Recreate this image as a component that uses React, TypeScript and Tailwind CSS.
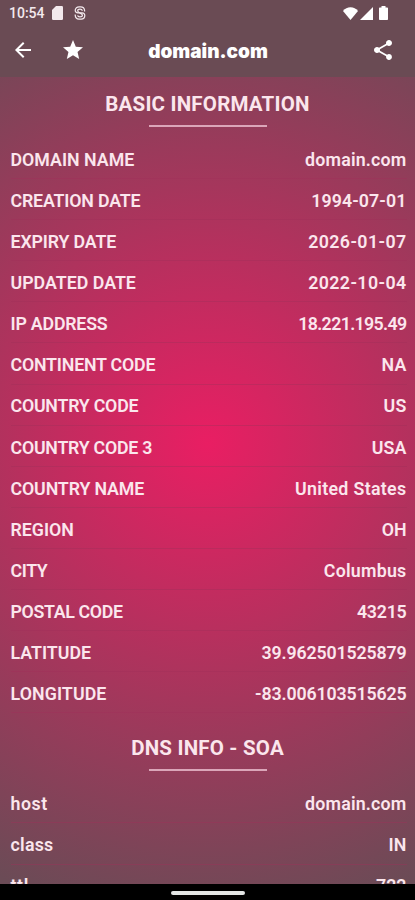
import React from 'react'

const basicInfo = [
  { label: 'DOMAIN NAME', value: 'domain.com', labelClass: 'tracking-normal', valueClass: 'tracking-[0.2px]' },
  { label: 'CREATION DATE', value: '1994-07-01', labelClass: 'tracking-[-0.18px]', valueClass: 'tracking-[0.1px]' },
  { label: 'EXPIRY DATE', value: '2026-01-07', labelClass: 'tracking-[-0.15px]', valueClass: 'tracking-[0.4px]' },
  { label: 'UPDATED DATE', value: '2022-10-04', labelClass: 'tracking-normal', valueClass: 'tracking-[0.4px]' },
  { label: 'IP ADDRESS', value: '18.221.195.49', labelClass: 'tracking-[-0.2px]', valueClass: 'tracking-[-0.65px]' },
  { label: 'CONTINENT CODE', value: 'NA', labelClass: 'tracking-[-0.2px]', valueClass: 'tracking-[0.2px]' },
  { label: 'COUNTRY CODE', value: 'US', labelClass: 'tracking-[-0.23px]', valueClass: 'tracking-[0.2px]' },
  { label: 'COUNTRY CODE 3', value: 'USA', labelClass: 'tracking-[-0.25px]', valueClass: 'tracking-[0.1px]' },
  { label: 'COUNTRY NAME', value: 'United States', labelClass: 'tracking-[-0.13px]', valueClass: 'tracking-[0.33px]' },
  { label: 'REGION', value: 'OH', labelClass: 'tracking-normal', valueClass: 'tracking-normal' },
  { label: 'CITY', value: 'Columbus', labelClass: 'tracking-[-0.4px]', valueClass: 'tracking-[0.25px]' },
  { label: 'POSTAL CODE', value: '43215', labelClass: 'tracking-[-0.35px]', valueClass: 'tracking-[-0.25px]' },
  { label: 'LATITUDE', value: '39.962501525879', labelClass: 'tracking-normal', valueClass: 'tracking-[-0.15px]' },
  { label: 'LONGITUDE', value: '-83.006103515625', labelClass: 'tracking-[0.1px]', valueClass: 'tracking-[-0.15px]' },
]

const dnsInfo = [
  { label: 'host', value: 'domain.com', labelClass: 'tracking-[0.5px]', valueClass: 'tracking-[0.2px]' },
  { label: 'class', value: 'IN', labelClass: 'tracking-[0.25px]', valueClass: 'tracking-[0.2px]' },
  { label: 'ttl', value: '722', labelClass: 'tracking-[0.6px]', valueClass: 'tracking-normal' },
]

const StatusBar = () => {
  return (
    <div className="flex h-[26px] shrink-0 items-center pl-[9px] pr-[27px] text-[#f3e9ed]">
      <span className="w-[43px] text-[14px] leading-none font-medium">10:54</span>
      <svg className="h-[14px] w-[11px]" viewBox="0 0 11 14" fill="currentColor">
        <path d="M4 0h5.8A1.2 1.2 0 0 1 11 1.2v11.6a1.2 1.2 0 0 1-1.2 1.2H1.2A1.2 1.2 0 0 1 0 12.8V4z" />
      </svg>
      <svg className="ml-[11px] h-[14px] w-[12px]" viewBox="0 0 12 14" fill="none" stroke="currentColor" strokeWidth="1.2">
        <path d="M10.600 5.600V4.600A4 4 0 0 0 6.600.9H5.200A4 4 0 0 0 1.200 4.200C1.200 6 2.500 6.800 4 6.900H8C9.700 7 10.800 8 10.800 9.600A3.700 3.700 0 0 1 7 13.100H5A4 4 0 0 1 1.200 9.400V8.400" />
        <path d="M8.400 4.700C8 3.500 7 3.200 6 3.200S3.700 3.500 3.700 4.700 5 6.400 6 7s2.400.9 2.400 2.300S7 10.900 6 10.900 3.800 10.500 3.600 9.300" />
      </svg>
      <div className="ml-auto flex items-center">
        <svg className="h-[13px] w-[15px]" viewBox="0 0 15 13" fill="#fff">
          <path d="M7.500 13L0 4C2 1.500 4.500.3 7.500.3S13 1.500 15 4z" />
        </svg>
        <svg className="ml-[2px] h-[13px] w-[13px]" viewBox="0 0 13 13" fill="#fff">
          <path d="M13 0v13H0z" />
        </svg>
        <svg className="ml-[6px] h-[14px] w-[9px]" viewBox="0 0 9 14" fill="#fff">
          <path d="M2.500 0h4v1.400H8.200a.8.800 0 0 1 .8.800v11a.8.800 0 0 1-.8.800H.8a.8.800 0 0 1-.8-.8v-11a.8.800 0 0 1 .8-.8h1.700z" />
        </svg>
      </div>
    </div>
  )
}

const Toolbar = () => {
  return (
    <div className="grid h-[51px] shrink-0 grid-cols-[1fr_auto_1fr] items-center pb-[3px] pl-[11px] pr-[20px] text-white">
      <div className="flex items-center gap-[26px]">
        <button aria-label="Back">
          <svg className="size-6" viewBox="0 0 24 24" fill="currentColor">
            <path d="M20 11H7.830l5.590-5.590L12 4l-8 8 8 8 1.410-1.410L7.830 13H20v-2z" />
          </svg>
        </button>
        <button aria-label="Favourite">
          <svg className="size-6" viewBox="0 0 24 24" fill="currentColor">
            <path d="M12 17.270L18.180 21l-1.640-7.030L22 9.240l-7.190-.61L12 2 9.190 8.630 2 9.240l5.460 4.730L5.820 21z" />
          </svg>
        </button>
      </div>
      <h1 className="translate-x-[5px] pt-[3px] font-[Inter] text-[19px] leading-none font-black">domain.com</h1>
      <button aria-label="Share" className="justify-self-end">
        <svg className="size-6" viewBox="0 0 24 24" fill="currentColor">
          <path d="M18 16.080c-.76 0-1.440.3-1.960.77L8.910 12.700c.05-.23.09-.46.09-.7s-.04-.47-.09-.7l7.050-4.110c.54.5 1.250.81 2.040.81 1.660 0 3-1.340 3-3s-1.340-3-3-3-3 1.340-3 3c0 .24.04.47.09.7L8.040 9.810C7.500 9.310 6.790 9 6 9c-1.660 0-3 1.340-3 3s1.340 3 3 3c.79 0 1.500-.31 2.040-.81l7.120 4.160c-.05.21-.08.43-.08.65 0 1.610 1.310 2.920 2.920 2.920s2.920-1.310 2.920-2.920-1.310-2.920-2.920-2.920z" />
        </svg>
      </button>
    </div>
  )
}

const SectionTitle = ({ title }: any) => {
  return (
    <div className="flex h-[61px] shrink-0 flex-col items-center pt-[15px]">
      <h2 className="text-[20.5px] leading-[25px] font-bold tracking-[0.2px]">{title}</h2>
      <div className="mt-[8px] h-[2px] w-[118px] bg-[#dba6b9]"></div>
    </div>
  )
}

const InfoRow = ({ label, value, labelClass, valueClass }: any) => {
  return (
    <div className="flex h-[41.1px] shrink-0 items-center justify-between border-b border-[#a0305a]/40 pt-[3.5px] text-[17.8px] leading-none font-semibold">
      <span className={labelClass}>{label}</span>
      <span className={valueClass}>{value}</span>
    </div>
  )
}

const App = () => {
  return (
    <div className="flex h-[900px] w-full flex-col overflow-hidden bg-black font-[Roboto,sans-serif]">
      <header className="shrink-0 bg-[#6a4b54]">
        <StatusBar />
        <Toolbar />
      </header>
      <main className="flex min-h-0 flex-1 flex-col overflow-hidden bg-[radial-gradient(circle_480px_at_50%_367px,#e91e63,#6b4b56)] text-[#fbe6ed]">
        <SectionTitle title="BASIC INFORMATION" />
        <div className="flex flex-col pr-[8.5px] pl-[10.5px]">
          {basicInfo.map((item) => (
            <InfoRow key={item.label} {...item} />
          ))}
        </div>
        <div className="h-[8px] shrink-0"></div>
        <SectionTitle title="DNS INFO - SOA" />
        <div className="flex flex-col pr-[8.5px] pl-[10.5px]">
          {dnsInfo.map((item) => (
            <InfoRow key={item.label} {...item} />
          ))}
        </div>
      </main>
      <footer className="flex h-[16px] shrink-0 justify-center bg-black pt-[7px]">
        <div className="h-[4px] w-[74px] rounded-full bg-[#e4e6e5]"></div>
      </footer>
    </div>
  )
}

export default App
